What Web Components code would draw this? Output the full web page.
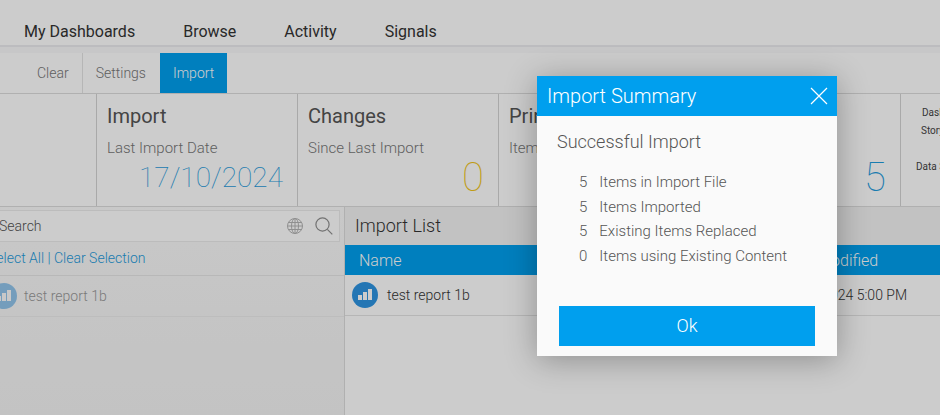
<!DOCTYPE html>
<html>
<head>
<meta charset="utf-8">
<title>Import</title>
<style>
  html, body { margin: 0; height: 100%; overflow: hidden; background: #fff; }
  body { font-family: Roboto, "Liberation Sans", sans-serif; color: #444; position: relative; }
  .stats { display: grid; grid-template-columns: repeat(5, 201px) 100px; margin-left: -104px; height: 113px; border-bottom: 1px solid #dcdcdc; box-sizing: border-box; }
  .work { display: flex; height: 208px; margin-left: -30px; }
</style>
</head>
<body>
<app-nav></app-nav>
<sub-nav></sub-nav>
<div class="stats">
  <stat-card></stat-card>
  <stat-card heading="Import" label="Last Import Date" value="17/10/2024" tone="#1f9bdc" size="28"></stat-card>
  <stat-card heading="Changes" label="Since Last Import" value="0" tone="#f0c419" size="40"></stat-card>
  <stat-card heading="Print" label="Items"></stat-card>
  <stat-card value="5" tone="#1f9bdc" size="40"></stat-card>
  <content-types></content-types>
</div>
<div class="work">
  <search-panel></search-panel>
  <import-list></import-list>
</div>
<import-summary></import-summary>

<script>
  class AppNav extends HTMLElement {
    constructor() {
      super();
      this.attachShadow({ mode: 'open' });
    }
    connectedCallback() {
      this.shadowRoot.innerHTML = /* html */`
        <style>
          :host { display: block; height: 53px; box-sizing: border-box; background: #f9f9fb; }
          nav { display: flex; gap: 48px; height: 47px; box-sizing: border-box; padding: 22px 0 0 24px; background: #fff; border-bottom: 2px solid #ebebef; }
          span { font-size: 16px; line-height: 19px; color: #333; }
        </style>
        <nav>
          <span>My Dashboards</span>
          <span>Browse</span>
          <span>Activity</span>
          <span>Signals</span>
        </nav>
      `;
    }
  }

  class SubNav extends HTMLElement {
    constructor() {
      super();
      this.attachShadow({ mode: 'open' });
    }
    connectedCallback() {
      this.shadowRoot.innerHTML = /* html */`
        <style>
          :host { display: flex; height: 41px; box-sizing: border-box; border-bottom: 1px solid #dcdcdc; background: #fff; font-size: 14px; font-weight: 300; }
          div { display: flex; align-items: center; height: 40px; padding: 0 13px 0 37px; color: #777; }
          .settings { padding: 0 14px 0 13px; border-left: 1px solid #e4e4e4; }
          .active { padding: 0 13px; background: #009fee; color: #fff; }
        </style>
        <div>Clear</div>
        <div class="settings">Settings</div>
        <div class="active">Import</div>
      `;
    }
  }

  class StatCard extends HTMLElement {
    constructor() {
      super();
      this.attachShadow({ mode: 'open' });
    }
    connectedCallback() {
      const heading = this.getAttribute('heading') || '';
      const label = this.getAttribute('label') || '';
      const value = this.getAttribute('value') || '';
      const tone = this.getAttribute('tone') || '#444';
      const size = this.getAttribute('size') || '28';
      this.shadowRoot.innerHTML = /* html */`
        <style>
          :host { display: flex; flex-direction: column; box-sizing: border-box; border-right: 1px solid #d4d4d4; padding: 10px 14px 0 10px; }
          h3 { margin: 0; height: 24px; font-size: 20px; line-height: 24px; font-weight: 400; color: #555; }
          p { margin: 12px 0 0; height: 16px; font-size: 15px; line-height: 16px; font-weight: 300; color: #777; white-space: nowrap; }
          b { height: 42px; margin-top: 1px; font-size: ${size}px; line-height: 42px; text-align: right; color: ${tone}; font-weight: 100; }
        </style>
        <h3>${heading}</h3>
        <p>${label}</p>
        <b>${value}</b>
      `;
    }
  }

  class ContentTypes extends HTMLElement {
    constructor() {
      super();
      this.attachShadow({ mode: 'open' });
    }
    connectedCallback() {
      this.shadowRoot.innerHTML = /* html */`
        <style>
          :host { display: block; width: 100px; padding-top: 13px; font-size: 10px; line-height: 12px; color: #444; white-space: nowrap; }
          div { height: 18px; padding-left: 21px; }
          .stor { padding-left: 20px; }
          .data { margin-top: 18px; padding-left: 15px; }
        </style>
        <div>Dashboards</div>
        <div class="stor">Storyboards</div>
        <div class="data">Data Sources</div>
      `;
    }
  }

  class ReportIcon extends HTMLElement {
    constructor() {
      super();
      this.attachShadow({ mode: 'open' });
    }
    connectedCallback() {
      this.shadowRoot.innerHTML = /* html */`
        <style>
          :host { display: block; width: 26px; height: 26px; flex: none; }
          svg { display: block; }
        </style>
        <svg width="26" height="26" viewBox="0 0 26 26">
          <circle cx="13" cy="13" r="13" fill="#2d94e2"/>
          <path d="M6 13h4v5H6zM11 10h4v8h-4zM16 7h4v11h-4z" fill="#fff"/>
        </svg>
      `;
    }
  }

  class SearchPanel extends HTMLElement {
    constructor() {
      super();
      this.attachShadow({ mode: 'open' });
    }
    connectedCallback() {
      this.shadowRoot.innerHTML = /* html */`
        <style>
          :host { display: block; width: 375px; box-sizing: border-box; border-right: 1px solid #dcdcdc; background: linear-gradient(#fafafa, #f4f4f4); padding-top: 3px; }
          .search { display: flex; align-items: center; height: 32px; box-sizing: border-box; margin: 0 4px 0 5px; padding: 0 6px 0 23px; background: #fff; border: 1px solid #ececec; font-size: 14px; color: #555; font-weight: 300; }
          .search span { flex: 1; }
          .search svg { display: block; }
          .search .globe { margin-right: 11px; }
          .links { display: flex; align-items: center; height: 34px; box-sizing: border-box; padding: 0 0 2px 18px; font-size: 14px; color: #1f9bdc; border-bottom: 1px solid #e6e6e6; font-weight: 300; }
          .row { display: flex; align-items: center; gap: 7px; height: 41px; box-sizing: border-box; padding-left: 21px; border-bottom: 1px solid #ededed; color: #999; font-size: 14px; font-weight: 300; }
          report-icon { opacity: .5; }
        </style>
        <div class="search">
          <span>Search</span>
          <svg class="globe" width="18" height="18" viewBox="0 0 18 18" fill="none" stroke="#b4b4b4" stroke-width="1">
            <circle cx="9" cy="9" r="7.5"/>
            <ellipse cx="9" cy="9" rx="3.5" ry="7.5"/>
            <path d="M9 1.5v15M1.5 9h15M2.5 5.5h13M2.5 12.5h13"/>
          </svg>
          <svg width="18" height="18" viewBox="0 0 18 18" fill="none" stroke="#8f8f8f" stroke-width="1.2">
            <circle cx="7.5" cy="7.5" r="6.6"/>
            <path d="M12.3 12.3l5 5"/>
          </svg>
        </div>
        <div class="links">Select All | Clear Selection</div>
        <div class="row"><report-icon></report-icon><span>test report 1b</span></div>
      `;
    }
  }

  class ImportList extends HTMLElement {
    constructor() {
      super();
      this.attachShadow({ mode: 'open' });
    }
    connectedCallback() {
      this.shadowRoot.innerHTML = /* html */`
        <style>
          :host { display: block; flex: 1; background: #fff; }
          h2 { margin: 0; height: 38px; padding-left: 10px; background: #f3f3f3; font-size: 18px; line-height: 37px; font-weight: 300; color: #333; }
          .cols { display: grid; grid-template-columns: 424px 1fr; align-items: center; height: 30px; padding-left: 14px; background: #009fee; color: #fff; font-size: 16px; font-weight: 300; }
          .row { display: grid; grid-template-columns: 428px 1fr; align-items: center; height: 41px; box-sizing: border-box; padding-left: 7px; border-bottom: 1px solid #e4e4e4; font-size: 14px; color: #333; font-weight: 300; }
          .name { display: flex; align-items: center; gap: 9px; }
          span { white-space: nowrap; }
        </style>
        <h2>Import List</h2>
        <div class="cols"><span>Name</span><span>Last Modified</span></div>
        <div class="row">
          <div class="name"><report-icon></report-icon><span>test report 1b</span></div>
          <span>17/10/2024 5:00 PM</span>
        </div>
      `;
    }
  }

  class ImportSummary extends HTMLElement {
    constructor() {
      super();
      this.attachShadow({ mode: 'open' });
    }
    connectedCallback() {
      const rows = [
        ['5', 'Items in Import File'],
        ['5', 'Items Imported'],
        ['5', 'Existing Items Replaced'],
        ['0', 'Items using Existing Content']
      ];
      this.shadowRoot.innerHTML = /* html */`
        <style>
          :host { display: block; position: absolute; inset: 0; background: rgba(0, 0, 0, .2); }
          .dialog { position: absolute; left: 537px; top: 76px; width: 300px; height: 280px; background: #fafafa; box-shadow: 0 4px 30px rgba(0, 0, 0, .3); display: flex; flex-direction: column; }
          header { display: flex; align-items: center; justify-content: space-between; height: 40px; flex: none; padding: 0 9px 0 10px; background: #009fee; color: #fff; font-size: 20px; font-weight: 300; }
          header svg { display: block; }
          h4 { margin: 0; padding: 14px 0 0 20px; height: 24px; font-size: 18px; line-height: 24px; font-weight: 300; color: #555; }
          ul { list-style: none; margin: 16px 0 0; padding: 0 0 0 42px; font-size: 15px; color: #555; font-weight: 300; }
          li { display: flex; gap: 12px; height: 24.67px; line-height: 24.67px; }
          button { margin: auto 22px 10px; height: 40px; border: 0; padding: 0 0 2px; background: #009fee; color: #fff; font: 300 18px Roboto, "Liberation Sans", sans-serif; }
        </style>
        <div class="dialog">
          <header>
            <span>Import Summary</span>
            <svg width="18" height="18" viewBox="0 0 18 18" fill="none" stroke="#fff" stroke-width="1.2"><path d="M1 1l16 16M17 1L1 17"/></svg>
          </header>
          <h4>Successful Import</h4>
          <ul>${rows.map(r => `<li><span>${r[0]}</span><span>${r[1]}</span></li>`).join('')}</ul>
          <button>Ok</button>
        </div>
      `;
    }
  }

  customElements.define('app-nav', AppNav);
  customElements.define('sub-nav', SubNav);
  customElements.define('stat-card', StatCard);
  customElements.define('content-types', ContentTypes);
  customElements.define('report-icon', ReportIcon);
  customElements.define('search-panel', SearchPanel);
  customElements.define('import-list', ImportList);
  customElements.define('import-summary', ImportSummary);
</script>
</body>
</html>
